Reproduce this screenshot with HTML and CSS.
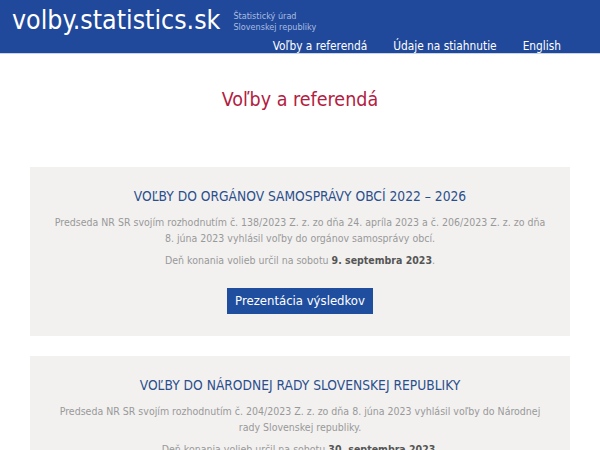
FILE: index.html
```html
<!DOCTYPE html>
<html lang="sk">
<head>
  <meta charset="UTF-8" />
  <meta name="viewport" content="width=device-width, initial-scale=1.0"/>
  <title>Voľby a referendá</title>
  <link rel="stylesheet" href="styles.css">
</head>
<body>
  <header class="site-header">
    <div class="brand">
      <a class="logo" href="#">volby.statistics.sk</a>
      <span class="office">Štatistický úrad<br>Slovenskej republiky</span>
    </div>
    <nav class="main-nav">
      <a href="#">Voľby a referendá</a>
      <a href="#">Údaje na stiahnutie</a>
      <a href="#">English</a>
    </nav>
  </header>

  <main class="container">
    <h1 class="page-title">Voľby a referendá</h1>

    <section class="election">
      <h2>VOĽBY DO ORGÁNOV SAMOSPRÁVY OBCÍ 2022 – 2026</h2>
      <p>Predseda NR SR svojím rozhodnutím č. 138/2023 Z. z. zo dňa 24. apríla 2023 a č. 206/2023 Z. z. zo dňa 8. júna 2023 vyhlásil voľby do orgánov samosprávy obcí.</p>
      <p class="date">Deň konania volieb určil na sobotu <strong>9. septembra 2023</strong>.</p>
      <a class="btn" href="#">Prezentácia výsledkov</a>
    </section>

    <section class="election">
      <h2>VOĽBY DO NÁRODNEJ RADY SLOVENSKEJ REPUBLIKY</h2>
      <p>Predseda NR SR svojím rozhodnutím č. 204/2023 Z. z. zo dňa 8. júna 2023 vyhlásil voľby do Národnej rady Slovenskej republiky.</p>
      <p class="date">Deň konania volieb určil na sobotu <strong>30. septembra 2023</strong>.</p>
      <a class="btn" href="#">Prezentácia výsledkov</a>
    </section>
  </main>
</body>
</html>
```

FILE: styles.css
```css
body {
  font-family: "DejaVu Sans Condensed", "DejaVu Sans", Verdana, sans-serif;
  font-stretch: condensed;
  margin: 0;
  background-color: #fff;
  color: #999;
}
a {
  text-decoration: none;
}
.site-header {
  background-color: #21499b;
  border-bottom: 1px solid #c9d3e6;
  height: 53px;
  padding: 0 0 0 12px;
  display: flex;
  flex-direction: column;
}
.brand {
  display: flex;
  align-items: flex-start;
  gap: 13px;
}
.logo {
  color: #fff;
  font-size: 26.5px;
  line-height: 30px;
  margin-top: 5px;
}
.office {
  color: #a9bde0;
  font-size: 9px;
  line-height: 11px;
  margin-top: 11px;
}
.main-nav {
  display: flex;
  justify-content: flex-end;
  margin: 3px 26px 0 0;
}
.main-nav a {
  color: #fff;
  font-size: 11.8px;
  line-height: 16px;
  padding: 0 13px;
}
.container {
  padding: 0 30px;
}
.page-title {
  color: #b3203f;
  font-size: 19.5px;
  font-weight: normal;
  line-height: 24px;
  text-align: center;
  margin: 34px 0 55px;
}
.election {
  background-color: #f2f1f0;
  padding: 19px 20px 22px;
  margin-bottom: 20px;
  text-align: center;
}
.election h2 {
  color: #2b4f8c;
  font-size: 13.7px;
  font-weight: normal;
  line-height: 20px;
  margin: 0;
}
.election p {
  font-size: 10.5px;
  line-height: 16px;
  margin: 8px 0 0;
}
.election p.date {
  margin-top: 6px;
}
.election strong {
  color: #555;
}
.btn {
  display: inline-block;
  margin-top: 20px;
  background-color: #1f4e9f;
  color: #fff;
  font-size: 13px;
  line-height: 26px;
  padding: 0 8px;
}
```
